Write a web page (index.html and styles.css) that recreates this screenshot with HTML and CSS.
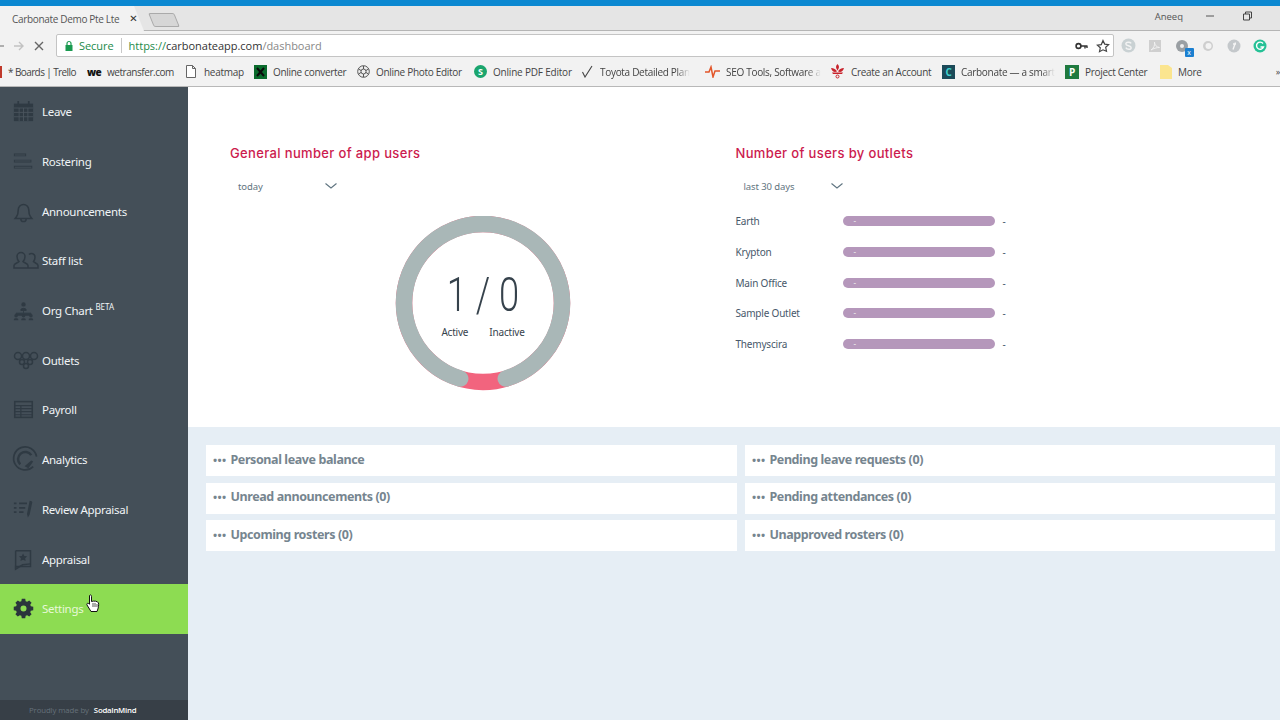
FILE: index.html
```html
<!DOCTYPE html>
<html lang="en">
<head>
<meta charset="utf-8">
<title>Carbonate Demo Pte Ltd</title>
<link rel="stylesheet" href="styles.css">
</head>
<body>
<div class="browser">
  <div class="accent"></div>
  <div class="tabstrip">
    <div class="tab"><span class="tab-title">Carbonate Demo Pte Lte</span><span class="tab-close">✕</span></div>
    <div class="newtab"></div>
    <div class="winbar">
      <span class="profile">Aneeq</span>
      <svg class="win" width="10" height="10" viewBox="0 0 10 10"><path d="M1 5h8" stroke="#555" fill="none"/></svg>
      <svg class="win" width="10" height="10" viewBox="0 0 10 10"><path d="M1.5 3h6v6h-6zM3.5 3V1h6v6h-2" stroke="#444" fill="none"/></svg>
    </div>
  </div>
  <div class="toolbar">
    <div class="navbtns">
      <svg width="12" height="12" viewBox="0 0 12 12"><path d="M11 6H2M6 2L2 6l4 4" stroke="#999" stroke-width="1.4" fill="none"/></svg>
      <svg width="12" height="12" viewBox="0 0 12 12"><path d="M1 6h9M6 2l4 4-4 4" stroke="#c2c2c2" stroke-width="1.4" fill="none"/></svg>
      <svg width="12" height="12" viewBox="0 0 12 12"><path d="M2 2l8 8M10 2l-8 8" stroke="#666" stroke-width="1.4" fill="none"/></svg>
    </div>
    <div class="omnibox">
      <svg class="lock" width="10" height="12" viewBox="0 0 10 12"><path d="M3 5V3.5a2 2 0 0 1 4 0V5" stroke="#1a9a50" fill="none" stroke-width="1.2"/><rect x="1.5" y="5" width="7" height="6" fill="#1a9a50"/></svg>
      <span class="secure">Secure</span>
      <span class="sep"></span>
      <span class="url"><span class="url-h">https://</span><span class="url-d">carbonateapp.com</span>/dashboard</span>
      <svg class="omni-key" width="13" height="8" viewBox="0 0 13 8"><circle cx="3.5" cy="4" r="2.4" stroke="#333" stroke-width="1.6" fill="none"/><path d="M6 4h6.5M10 4v2.5M12 4v2" stroke="#333" stroke-width="1.4" fill="none"/></svg>
      <svg width="14" height="14" viewBox="0 0 14 14"><path d="M7 1.5l1.7 3.6 3.9.5-2.9 2.7.8 3.9L7 10.8l-3.5 1.9.8-3.9L1.400 6.100l3.900-.5z" stroke="#444" stroke-width="1.200" fill="none"/></svg>
    </div>
    <div class="exts">
      <svg width="15" height="15" viewBox="0 0 14 14"><circle cx="7" cy="7" r="6.500" fill="#c9d1d3"/><path d="M9.500 5c-1-1.500-5-1.500-5 .5S9.500 7 9.500 9 5.500 11 4.500 9" stroke="#f3f3f3" stroke-width="1.300" fill="none"/></svg>
      <svg width="14" height="14" viewBox="0 0 14 14"><rect x="1" y="1" width="12" height="12" fill="#cfcfcf"/><path d="M3 11c3-2 4-5 3.500-8 0 3 2 5 5 5.500-3 0-6 1-8.500 2.500z" stroke="#f1f1f1" fill="none"/></svg>
      <span class="ext-badge"><svg width="14" height="14" viewBox="0 0 14 14"><circle cx="7" cy="7" r="6" fill="#9a9fa3"/><circle cx="7" cy="7" r="2" fill="#eee"/></svg><span class="ext-x">x</span></span>
      <svg width="14" height="14" viewBox="0 0 14 14"><circle cx="7" cy="7" r="5" fill="#cfcfcf"/><circle cx="7.500" cy="7" r="3" fill="#f3f3f3"/></svg>
      <svg width="14" height="14" viewBox="0 0 14 14"><circle cx="7" cy="7" r="6.500" fill="#c4c8cb"/><path d="M8.500 3.500L6 10.500M6 5h3" stroke="#f5f5f5" stroke-width="1.400" fill="none"/></svg>
      <svg width="14" height="14" viewBox="0 0 14 14"><circle cx="7" cy="7" r="6.500" fill="#25c196"/><path d="M10 4.500A3.600 3.600 0 1 0 10.500 8H7.500" stroke="#fff" stroke-width="1.400" fill="none"/></svg>
    </div>
  </div>
  <div class="bookmarks">
    <div class="bm bm-trello"><span class="bm-sliver"></span><span>* Boards | Trello</span></div>
    <div class="bm bm-we"><span class="we">we</span><span>wetransfer.com</span></div>
    <div class="bm bm-heat"><svg width="10" height="13" viewBox="0 0 10 13"><path d="M.5.500h6l3 3v9H.500zM6.500.500v3h3" stroke="#666" fill="#fff"/></svg><span>heatmap</span></div>
    <div class="bm bm-conv"><svg width="13" height="14" viewBox="0 0 13 14"><rect width="13" height="14" fill="#0a6b2c"/><path d="M3 3l7 8M10 3l-7 8" stroke="#0b0b0b" stroke-width="2"/></svg><span>Online converter</span></div>
    <div class="bm bm-photo"><svg width="13" height="13" viewBox="0 0 13 13"><circle cx="6.500" cy="6.500" r="5.800" stroke="#555" fill="#eee"/><circle cx="6.500" cy="6.500" r="2.500" stroke="#555" fill="none"/><path d="M6.500 1v3M1.500 4l2.500 1.500M1.500 9L4 7.500M6.500 12V9M11.500 9L9 7.500M11.500 4L9 5.500" stroke="#555" fill="none"/></svg><span>Online Photo Editor</span></div>
    <div class="bm bm-pdf"><span class="s-dot">S</span><span>Online PDF Editor</span></div>
    <div class="bm bm-toy"><svg width="13" height="13" viewBox="0 0 13 13"><path d="M1.500 7l2.500 5 7-11" stroke="#444" stroke-width="1.100" fill="none"/></svg><span class="fade">Toyota Detailed Plan</span></div>
    <div class="bm bm-seo"><svg width="15" height="13" viewBox="0 0 15 13"><path d="M0 7h4l2-5 2 10 2-6h5" stroke="#e2562a" stroke-width="1.500" fill="none"/></svg><span class="fade">SEO Tools, Software a</span></div>
    <div class="bm bm-acc"><svg width="15" height="15" viewBox="0 0 15 15"><path d="M7.500 0c2 1.800 2 3.800 0 6.500-2-2.700-2-4.700 0-6.500zM1 4c2.800 0 5 1.200 6 3.500-2.500 1-5 .3-6-3.500zM14 4c-2.800 0-5 1.200-6 3.500 2.500 1 5 .3 6-3.500zM2 8.500h11l-1 1.500H3z" fill="#c8232c"/><circle cx="7.500" cy="12.500" r="1.500" fill="none" stroke="#c8232c"/></svg><span>Create an Account</span></div>
    <div class="bm bm-carb"><span class="c-box">C</span><span class="fade">Carbonate — a smart</span></div>
    <div class="bm bm-proj"><span class="p-box">P</span><span>Project Center</span></div>
    <div class="bm bm-more"><svg width="12" height="14" viewBox="0 0 12 14"><path d="M0 0h8l4 3v11H0z" fill="#fbe58f"/></svg><span>More</span></div>
    <span class="bm-end">»</span>
  </div>
</div>

<div class="app">
  <aside class="sidebar">
    <nav class="nav">
      <a class="item"><svg class="ico" viewBox="0 0 24 24"><path d="M1 3h22v20H1z" fill="#2f3a43"/><path d="M6 0v5M18 0v5" stroke="#2f3a43" stroke-width="2"/><path d="M1 8h22M1 13h22M1 18h22M7 8v15M12 8v15M17 8v15" stroke="#4a555e" stroke-width="1"/></svg><span>Leave</span></a>
      <a class="item"><svg class="ico" viewBox="0 0 24 24"><path d="M1 4.500h14M1 11.500h20M1 18.500h21" stroke="#2f3a43" stroke-width="3.200" fill="none"/><path d="M2 4.500h12M2 11.500h18M2 18.500h19" stroke="#444f58" stroke-width="1.200"/></svg><span>Rostering</span></a>
      <a class="item"><svg class="ico" viewBox="0 0 24 24"><path d="M4 18c1.500-2 2-4 2-8a6 6 0 0 1 12 0c0 4 .5 6 2 8l1.500 2h-19z" stroke="#2f3a43" stroke-width="1.800" fill="none"/><path d="M9 20.500a3 3 0 0 0 6 0" stroke="#2f3a43" stroke-width="1.800" fill="none"/></svg><span>Announcements</span></a>
      <a class="item"><svg class="ico ico-wide" viewBox="0 0 26 17"><path d="M1 16v-2.500c0-2 4-2.500 5-4-1.500-1.500-2-3-2-5a4 4 0 0 1 8 0c0 2-.5 3.500-2 5 1 1.500 5 2 5 4V16zM15 16h10v-2.500c0-2-3.500-2.500-4.500-4 1.500-1.500 1.500-3 1.500-4.500a3.500 3.500 0 0 0-6-2.500" stroke="#2f3a43" stroke-width="1.500" fill="none"/></svg><span>Staff list</span></a>
      <a class="item"><svg class="ico" viewBox="0 0 24 24"><circle cx="12" cy="5" r="2.500" fill="#2f3a43"/><path d="M9 11c0-2 6-2 6 0v1H9zM12 12v3M3.500 18v-3h17v3" fill="#2f3a43" stroke="#2f3a43"/><circle cx="3.500" cy="18" r="2" fill="#2f3a43"/><circle cx="12" cy="18" r="2" fill="#2f3a43"/><circle cx="20.500" cy="18" r="2" fill="#2f3a43"/><path d="M1 23v-1c0-1.500 5-1.500 5 0v1zM9.500 23v-1c0-1.500 5-1.500 5 0v1zM18 23v-1c0-1.500 5-1.500 5 0v1z" fill="#2f3a43"/></svg><span>Org Chart <sup class="beta">BETA</sup></span></a>
      <a class="item"><svg class="ico ico-wide" viewBox="0 0 26 17"><g stroke="#2f3a43" stroke-width="1.500" fill="none"><circle cx="5" cy="4" r="3.500"/><circle cx="13" cy="4" r="3.500"/><circle cx="21" cy="4" r="3.500"/><circle cx="9" cy="10" r="2.500"/><circle cx="17" cy="10" r="2.500"/><circle cx="13" cy="14" r="2.500"/></g></svg><span>Outlets</span></a>
      <a class="item"><svg class="ico" viewBox="0 0 24 24"><rect x="2" y="3" width="20" height="18" stroke="#2f3a43" stroke-width="1.800" fill="none"/><path d="M2 7.500h20M2 11h20M2 14.500h20M2 18h20M9 7.500V21" stroke="#2f3a43" stroke-width="1.400"/></svg><span>Payroll</span></a>
      <a class="item"><svg class="ico ico-big" viewBox="0 0 26 26"><path d="M21 20.500A12 12 0 1 1 24.500 10" stroke="#2f3a43" stroke-width="1.800" fill="none"/><path d="M7.500 18A7.500 7.500 0 1 1 19 8.500" stroke="#2f3a43" stroke-width="2.600" fill="none"/><path d="M12 20l7-6 2 1-5 7z" fill="#2f3a43"/></svg><span>Analytics</span></a>
      <a class="item"><svg class="ico" viewBox="0 0 24 24"><path d="M1 5h3M1 10h3M1 15h3M7 5h9M7 10h7M7 15h5" stroke="#2f3a43" stroke-width="2"/><path d="M19 2c2 0 3 1 3 2l-3 14-2 3-1-4z" fill="#2f3a43"/></svg><span>Review Appraisal</span></a>
      <a class="item"><svg class="ico" viewBox="0 0 24 24"><path d="M3 2h17v18H3v3" stroke="#2f3a43" stroke-width="1.700" fill="none"/><path d="M3 2v21l8-5 9-1" stroke="#2f3a43" stroke-width="1.700" fill="none"/><path d="M11.500 5l1.500 3 3.200.4-2.300 2.200.6 3.200-3-1.500-3 1.500.6-3.200-2.300-2.200 3.200-.4z" fill="#2f3a43"/></svg><span>Appraisal</span></a>
      <a class="item item-active"><svg class="ico" viewBox="-2 -2 28 28"><path fill="#2b353c" fill-rule="evenodd" d="M9.700 -1h4.600l.6 3.200 2 .8 2.700-1.800 3.200 3.200-1.800 2.700.8 2 3.200.6v4.600l-3.200.6-.8 2 1.800 2.700-3.200 3.200-2.700-1.800-2 .8-.6 3.200H9.700l-.6-3.200-2-.8-2.700 1.800-3.200-3.200 1.800-2.700-.8-2L-1 14.300V9.700l3.200-.6.8-2L1.200 4.400 4.400 1.200l2.700 1.800 2-.8zM12 8a4 4 0 1 0 0 8 4 4 0 0 0 0-8z"/></svg><span>Settings</span></a>
    </nav>
    <svg class="cursor" width="14" height="19" viewBox="0 0 14 19"><path d="M3.500 1.500c.8-1 2-.6 2 .8v5.200c2-.8 6.500-.5 7 1.500.4 2 0 5-1.500 8.500H5L1 11c-.8-1.500.8-2.500 2.500-.8z" fill="#fff" stroke="#111" stroke-width="1"/><path d="M7 9v4M9 9v4M11 10v3" stroke="#111" stroke-width=".7"/></svg>
    <footer class="credit">Proudly made by <b>SodaInMind</b></footer>
  </aside>

  <main class="content">
    <section class="stats">
      <div class="panel panel-left">
        <h2 class="title">General number of app users</h2>
        <div class="select"><span>today</span><svg class="chev" width="12" height="6" viewBox="0 0 12 6"><path d="M.5.500L6 5 11.500.500" stroke="#5f7480" stroke-width="1.100" fill="none"/></svg></div>
        <div class="donut">
          <svg width="176" height="176" viewBox="0 0 176 176">
            <circle cx="88" cy="87" r="79" fill="none" stroke="#f2647e" stroke-width="16.500"/>
            <path d="M65.200 162.600A79 79 0 1 1 110.800 162.600" fill="none" stroke="#a9b7b7" stroke-width="16.500" stroke-linecap="round"/>
          </svg>
          <div class="donut-text">
            <div class="figure">1 / 0</div>
            <div class="legend"><span>Active</span><span>Inactive</span></div>
          </div>
        </div>
      </div>
      <div class="panel panel-right">
        <h2 class="title">Number of users by outlets</h2>
        <div class="select select-wide"><span>last 30 days</span><svg class="chev" width="12" height="6" viewBox="0 0 12 6"><path d="M.5.500L6 5 11.500.500" stroke="#5f7480" stroke-width="1.100" fill="none"/></svg></div>
        <ul class="bars">
          <li class="bar-row"><span class="bar-label">Earth</span><span class="bar"><i>-</i></span><span class="bar-val">-</span></li>
          <li class="bar-row"><span class="bar-label">Krypton</span><span class="bar"><i>-</i></span><span class="bar-val">-</span></li>
          <li class="bar-row"><span class="bar-label">Main Office</span><span class="bar"><i>-</i></span><span class="bar-val">-</span></li>
          <li class="bar-row"><span class="bar-label">Sample Outlet</span><span class="bar"><i>-</i></span><span class="bar-val">-</span></li>
          <li class="bar-row"><span class="bar-label">Themyscira</span><span class="bar"><i>-</i></span><span class="bar-val">-</span></li>
        </ul>
      </div>
    </section>
    <section class="cards">
      <div class="card"><span class="dots">•••</span> Personal leave balance</div>
      <div class="card"><span class="dots">•••</span> Pending leave requests (0)</div>
      <div class="card"><span class="dots">•••</span> Unread announcements (0)</div>
      <div class="card"><span class="dots">•••</span> Pending attendances (0)</div>
      <div class="card"><span class="dots">•••</span> Upcoming rosters (0)</div>
      <div class="card"><span class="dots">•••</span> Unapproved rosters (0)</div>
    </section>
  </main>
</div>
</body>
</html>
```
FILE: styles.css
```css
* { box-sizing: border-box; }
html, body { margin: 0; height: 720px; overflow: hidden; }
body { display: flex; flex-direction: column; font-family: "Noto Sans", sans-serif; background: #e6eef5; }

/* browser chrome */
.browser { flex: none; font-family: "Open Sans", sans-serif; color: #444; }
.accent { height: 6px; background: #0b88d1; }
.tabstrip { height: 25px; background: #e5e5e5; display: flex; align-items: stretch; border-bottom: 1px solid #b5b5b5; }
.tab { width: 144px; margin-bottom: -1px; background: #f2f2f2; display: flex; align-items: center; padding-left: 12px; font-size: 10px; letter-spacing: -.33px; color: #555; clip-path: polygon(0 0, 134px 0, 144px 100%, 0 100%); }
.tab-title { flex: none; white-space: nowrap; }
.tab-close { font-size: 10px; color: #333; margin-left: 10px; font-family: "DejaVu Sans", sans-serif; }
.newtab { width: 26px; height: 14px; margin: 7px 0 0 7px; background: #d6d6d6; border: 1px solid #aaa; transform: skewX(22deg); border-radius: 2px; }
.winbar { margin-left: auto; display: flex; align-items: center; padding: 0 28px 4px 0; gap: 27px; }
.profile { font-size: 9.500px; color: #555; margin-right: -5px; }
.toolbar { height: 29px; background: #f2f2f2; display: flex; align-items: center; }
.navbtns { width: 46px; display: flex; align-items: center; gap: 8px; margin-left: -7px; }
.navbtns svg { flex: none; }
.omnibox { width: 1058px; margin-left: 17px; height: 23px; background: #fff; border: 1px solid #c4c4c4; border-radius: 2px; display: flex; align-items: center; padding: 0 3px 0 7px; font-size: 11px; }
.lock { flex: none; }
.secure { margin-left: 5px; color: #1b8a4a; letter-spacing: -.05px; }
.sep { width: 1px; height: 15px; background: #c8c8c8; margin: 0 7px; }
.url { color: #888; font-size: 11px; letter-spacing: -.02px; }
.url-h { color: #1b8a4a; }
.url-d { color: #333; }
.omni-key { margin-left: auto; margin-right: 8px; }
.exts { display: flex; align-items: center; gap: 12.300px; margin-left: 7px; }
.ext-badge { position: relative; display: flex; }
.ext-x { position: absolute; right: -5px; bottom: -4px; width: 9px; height: 9px; background: #1b7fd0; color: #fff; font-size: 7px; line-height: 9px; text-align: center; border-radius: 1px; }
.bookmarks { height: 27px; background: #f2f2f2; border-bottom: 1px solid #b8b8b8; display: flex; align-items: center; font-size: 10px; letter-spacing: -.3px; color: #444; padding-bottom: 3px; }
.bm { display: flex; align-items: center; gap: 6px; white-space: nowrap; overflow: hidden; flex: none; }
.bm-trello { width: 87px; letter-spacing: -.6px; }
.bm-sliver { width: 2px; height: 12px; background: #c0392b; flex: none; }
.bm-we { width: 99px; letter-spacing: -.45px; gap: 5px; }
.we { font-weight: 800; color: #111; font-size: 10px; width: 15px; letter-spacing: -.5px; }
.bm-heat { width: 68px; gap: 8px; }
.bm-conv { width: 103px; }
.bm-photo { width: 117px; }
.bm-pdf { width: 107px; letter-spacing: -.2px; }
.bm-toy { width: 124px; }
.bm-seo { width: 125px; }
.bm-acc { width: 112px; }
.bm-carb { width: 123px; }
.bm-proj { width: 95px; }
.bm-more { width: 60px; }
.s-dot { width: 13px; height: 13px; border-radius: 50%; background: #1aa56d; color: #fff; font-size: 9px; font-weight: 700; line-height: 13px; text-align: center; }
.c-box { width: 13px; height: 14px; background: #1b4a59; color: #3fd4d0; font-size: 10px; font-weight: 700; line-height: 14px; text-align: center; }
.p-box { width: 14px; height: 14px; background: #1f7a3f; color: #fff; font-size: 10px; font-weight: 700; line-height: 14px; text-align: center; }
.fade { display: block; -webkit-mask-image: linear-gradient(90deg, #000 85%, transparent); mask-image: linear-gradient(90deg, #000 85%, transparent); }
.bm-end { margin-left: auto; font-size: 9px; }

/* app */
.app { flex: 1; min-height: 0; display: flex; }
.sidebar { width: 188px; flex: none; background: #444f58; display: flex; flex-direction: column; position: relative; }
.nav { display: flex; flex-direction: column; }
.item { height: 49.700px; display: flex; align-items: center; padding-left: 13px; color: #f0f4f6; font-size: 11.500px; letter-spacing: -.3px; }
.ico { width: 21px; height: 21px; flex: none; margin-right: 8px; overflow: visible; }
.ico-wide { width: 26px; height: 17px; margin-right: 3px; }
.ico-big { width: 25px; height: 25px; margin-right: 4px; }
.item-active { background: #8ddc52; color: #e8f8d8; }
.beta { font-size: 8px; vertical-align: 5px; line-height: 0; letter-spacing: 0; }
.cursor { position: absolute; left: 86px; top: 507px; }
.credit { margin-top: auto; height: 20px; background: #373f47; color: #66717a; font-size: 7.800px; letter-spacing: -.1px; display: flex; align-items: center; gap: 3px; padding-left: 29px; white-space: pre; font-family: "Open Sans", sans-serif; }
.credit b { color: #fff; font-weight: 600; letter-spacing: -.25px; }

.content { flex: 1; min-width: 0; display: flex; flex-direction: column; }
.stats { height: 340px; background: #fff; display: flex; padding: 58px 0 0 42px; }
.panel { display: flex; flex-direction: column; }
.panel-left { width: 505.500px; }
.panel-right { flex: 1; }
.title { margin: 0; font-family: Inter, sans-serif; font-size: 13px; font-weight: 500; color: #cc1b4e; line-height: 17px; letter-spacing: .35px; }
.select { width: 99px; margin: 16px 0 0 8px; height: 17px; display: flex; align-items: center; justify-content: space-between; font-size: 9.500px; color: #5f7480; letter-spacing: -.1px; }
.chev { margin-bottom: 2px; }
.donut { position: relative; width: 176px; height: 176px; margin: 21px 0 0 165px; }
.donut svg { display: block; }
.donut-text { position: absolute; inset: 0; display: flex; flex-direction: column; align-items: center; color: #36424c; }
.figure { font-family: Roboto, sans-serif; font-weight: 300; font-size: 49px; line-height: 56px; margin-top: 51px; transform: scaleX(.74); white-space: nowrap; }
.legend { display: flex; gap: 21px; font-size: 10px; letter-spacing: -.2px; margin-top: 2px; }
.bars { list-style: none; margin: 11px 0 0; padding: 0; }
.bar-row { display: flex; align-items: center; height: 30.700px; font-size: 10px; color: #47586a; letter-spacing: -.2px; }
.bar-label { width: 107px; }
.bar { width: 152px; height: 10px; border-radius: 5px; background: #b597bb; color: #eee; font-size: 8px; line-height: 9px; padding-left: 11px; }
.bar i { font-style: normal; }
.bar-val { margin-left: 8px; }

.cards { display: grid; grid-template-columns: 531px 530px; column-gap: 8px; row-gap: 6.500px; padding: 18px 0 0 18px; }
.card { height: 31px; background: #fff; display: flex; align-items: center; padding: 0 0 3px 7px; gap: 1px; font-size: 12.500px; font-weight: 700; color: #76858f; letter-spacing: -.4px; white-space: pre; }
.dots { font-size: 11px; letter-spacing: .4px; }
```
